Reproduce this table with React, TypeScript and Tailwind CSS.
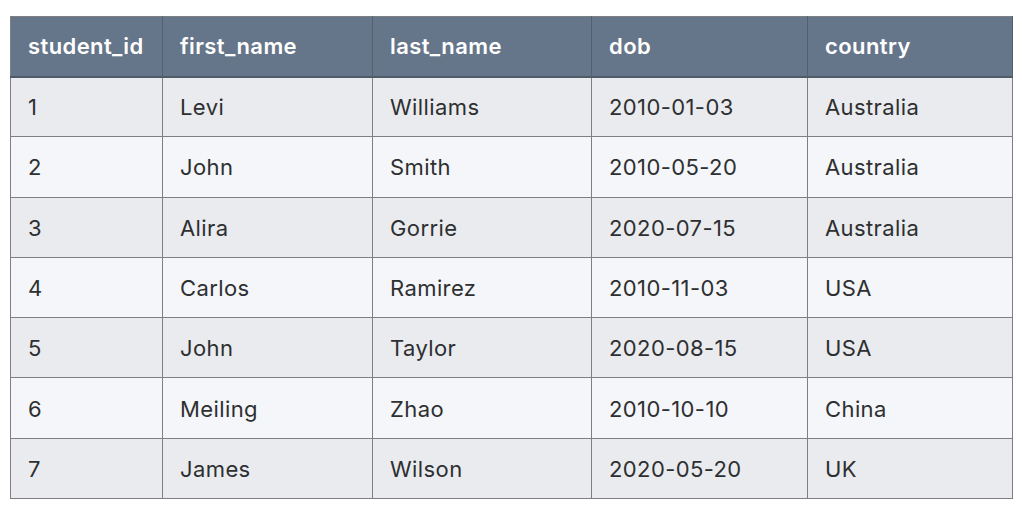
const columns = [
  { key: 'student_id', width: 'w-[152px]' },
  { key: 'first_name', width: 'w-[210px]' },
  { key: 'last_name', width: 'w-[219px]' },
  { key: 'dob', width: 'w-[216px]' },
  { key: 'country', width: 'w-[205px]' },
]

const rows = [
  ['1', 'Levi', 'Williams', '2010-01-03', 'Australia'],
  ['2', 'John', 'Smith', '2010-05-20', 'Australia'],
  ['3', 'Alira', 'Gorrie', '2020-07-15', 'Australia'],
  ['4', 'Carlos', 'Ramirez', '2010-11-03', 'USA'],
  ['5', 'John', 'Taylor', '2020-08-15', 'USA'],
  ['6', 'Meiling', 'Zhao', '2010-10-10', 'China'],
  ['7', 'James', 'Wilson', '2020-05-20', 'UK'],
]

export default function App() {
  return (
    <div className="w-[1022px] h-[522px] bg-white pt-[16px] pl-[10px] font-['Inter',sans-serif] tracking-[0.025em]">
      <table className="border-collapse table-fixed w-[1002px] border border-[#7d7f82]">
        <thead>
          <tr className="h-[60px] bg-[#66768a] border-b-2 border-b-[#4f5b69]">
            {columns.map((c) => (
              <th
                key={c.key}
                className={`${c.width} border-r border-[#56606c] text-left pl-[17px] pt-[1px] text-[22px] font-semibold text-white`}
              >
                {c.key}
              </th>
            ))}
          </tr>
        </thead>
        <tbody>
          {rows.map((r, i) => (
            <tr
              key={i}
              className={`h-[60.3px] border-b border-[#7d7f82] ${i % 2 === 0 ? 'bg-[#e9ebee]' : 'bg-[#f4f6f9]'}`}
            >
              {r.map((cell, j) => (
                <td key={j} className="border-r border-[#7d7f82] pl-[17px] pt-[2px] text-[22px] text-[#2e2f31]">
                  {cell}
                </td>
              ))}
            </tr>
          ))}
        </tbody>
      </table>
    </div>
  )
}
